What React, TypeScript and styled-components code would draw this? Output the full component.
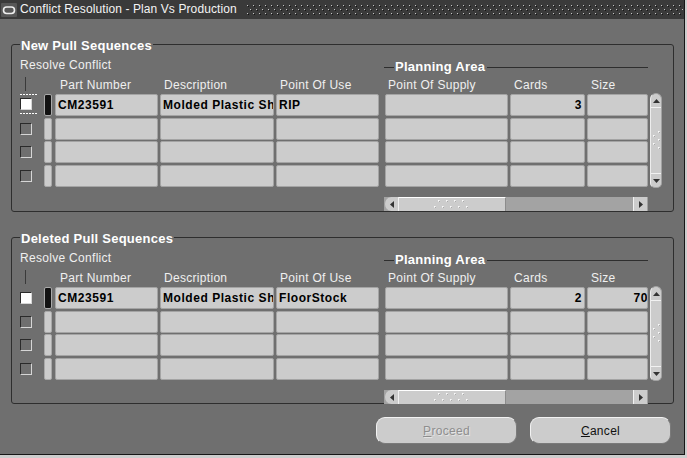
import React from "react";
import styled, { createGlobalStyle } from "styled-components";

const GlobalStyle = createGlobalStyle`
  html, body { margin: 0; padding: 0; }
  body {
    background: #cdcdcd;
    font-family: "Liberation Sans", Arial, sans-serif;
    font-size: 12px;
  }
`;

type RowData = {
  part?: string;
  desc?: string;
  use?: string;
  supply?: string;
  cards?: string;
  size?: string;
};

type Col = {
  key: keyof RowData;
  label: string;
  w: number;
  after: number;
  pad: number;
  right?: boolean;
};

const COLS: Col[] = [
  { key: "part", label: "Part Number", w: 103, after: 2, pad: 5 },
  { key: "desc", label: "Description", w: 114, after: 2, pad: 4 },
  { key: "use", label: "Point Of Use", w: 103, after: 6, pad: 4 },
  { key: "supply", label: "Point Of Supply", w: 123, after: 2, pad: 3 },
  { key: "cards", label: "Cards", w: 75, after: 2, pad: 4, right: true },
  { key: "size", label: "Size", w: 61, after: 0, pad: 4, right: true },
];

const newRows: RowData[] = [
  { part: "CM23591", desc: "Molded Plastic Shell", use: "RIP", cards: "3" },
  {},
  {},
  {},
];

const deletedRows: RowData[] = [
  { part: "CM23591", desc: "Molded Plastic Shell", use: "FloorStock", cards: "2", size: "70" },
  {},
  {},
  {},
];

const BG = "#6f6f6f";

const Window = styled.div`
  width: 685px;
  height: 455px;
  box-sizing: border-box;
  border-right: 1px solid #161616;
  border-bottom: 1px solid #161616;
  background: ${BG};
  display: flex;
  flex-direction: column;
`;

const TitleBar = styled.div`
  height: 19px;
  flex: none;
  background: #3a3a3a;
  display: flex;
  align-items: center;
  color: #f4f4f4;
  line-height: 19px;
  letter-spacing: 0.1px;
`;

const TitleText = styled.span`
  margin-left: 2px;
  white-space: nowrap;
`;

const TitleDots = styled.svg`
  flex: 1 1 0;
  min-width: 0;
  height: 12px;
  margin: 0 1px 0 9px;
`;

const Content = styled.div`
  padding: 25px 0 0 11px;
  display: flex;
  flex-direction: column;
`;

const Group = styled.section<{ $h: number }>`
  position: relative;
  width: 663px;
  height: ${(p) => p.$h}px;
  box-sizing: border-box;
  border: 1px solid #2e2e2e;
  border-radius: 3px;
  padding: 13px 0 0 8px;

  & + & {
    margin-top: 25px;
  }
`;

const Legend = styled.h2`
  position: absolute;
  top: -7px;
  left: 8px;
  margin: 0;
  padding: 0 1px;
  background: ${BG};
  color: #fff;
  font-size: 13px;
  font-weight: bold;
  line-height: 15px;
  letter-spacing: 0.25px;
`;

const HeadTop = styled.div`
  display: flex;
  height: 14px;
`;

const Label = styled.div`
  color: #f0f0f0;
  line-height: 14px;
  letter-spacing: 0.3px;
  white-space: nowrap;
`;

const ResolveLabel = styled(Label)`
  width: 364px;
`;

const AreaTitle = styled.div`
  width: 264px;
  height: 14px;
  margin-top: 2px;
  display: flex;
  align-items: center;
  color: #fff;
  font-size: 13px;
  font-weight: bold;
  line-height: 14px;
  letter-spacing: 0.25px;
  white-space: nowrap;

  &::before {
    content: "";
    width: 10px;
    border-top: 1px solid #2e2e2e;
    margin-right: 1px;
  }
  &::after {
    content: "";
    flex: 1;
    border-top: 1px solid #2e2e2e;
    margin-left: 2px;
  }
`;

const HeadCols = styled.div`
  display: flex;
  height: 14px;
  margin-top: 6px;
`;

const Tick = styled.div`
  width: 24px;
  height: 14px;
  &::before {
    content: "";
    display: block;
    margin: -1px 0 0 5px;
    width: 1px;
    height: 14px;
    background: #3a3a3a;
  }
`;

const Spacer = styled.div<{ $w: number }>`
  width: ${(p) => p.$w}px;
  flex: none;
`;

const Track = styled.div`
  flex: 1;
`;

const HeadCell = styled(Label)<{ $w: number; $after: number; $pad: number }>`
  width: ${(p) => p.$w}px;
  margin-right: ${(p) => p.$after}px;
  padding-left: ${(p) => p.$pad}px;
  box-sizing: border-box;
`;

const Table = styled.div`
  display: flex;
  margin-top: 2px;
`;

const Rows = styled.div`
  display: flex;
  flex-direction: column;
  gap: 1.5px;
`;

const Row = styled.div`
  display: flex;
  align-items: center;
  height: 22px;
`;

const CheckCell = styled.div`
  width: 24px;
  height: 22px;
  display: flex;
  align-items: center;
  flex: none;
`;

const Focus = styled.div`
  align-self: flex-start;
  width: 17px;
  height: 20px;
  display: flex;
  align-items: center;
  background:
    repeating-linear-gradient(90deg, #fff 0 2px, transparent 2px 3px) top / 100% 1px no-repeat,
    repeating-linear-gradient(90deg, #fff 0 2px, transparent 2px 3px) bottom / 100% 1px no-repeat;
`;

const Box = styled.span<{ $on?: boolean }>`
  display: block;
  width: 12px;
  height: 12px;
  box-sizing: border-box;
  border-top: 1px solid #2a2a2a;
  border-left: 1px solid #2a2a2a;
  border-right: 1px solid #d6d6d6;
  border-bottom: 1px solid #d6d6d6;
  background: ${(p) => (p.$on ? "#fff" : "transparent")};
`;

const Indicator = styled.div<{ $current?: boolean }>`
  width: 8px;
  height: 22px;
  flex: none;
  box-sizing: border-box;
  margin-right: 3px;
  border: 1px solid #a9a9a9;
  border-radius: 2px;
  background: ${(p) => (p.$current ? "#121212" : "#cccccc")};
`;

const Field = styled.div<{ $w: number; $after: number; $right?: boolean }>`
  width: ${(p) => p.$w}px;
  margin-right: ${(p) => p.$after}px;
  height: 22px;
  flex: none;
  box-sizing: border-box;
  background: #cccccc;
  border: 1px solid #a4a4a4;
  border-radius: 2px;
  padding: 0 2px;
  display: flex;
  align-items: center;
  justify-content: ${(p) => (p.$right ? "flex-end" : "flex-start")};
  overflow: hidden;
  white-space: nowrap;
  color: #000;
  font-weight: bold;
  letter-spacing: 0.55px;
`;

const Clipped = styled.span`
  margin-right: -3px;
`;

const VScroll = styled.div`
  width: 12px;
  height: 95px;
  margin: -1px 0 0 2px;
  box-sizing: border-box;
  background: #cccccc;
  border: 1px solid #a2a2a2;
  border-left-color: #ededed;
  border-radius: 6px 6px 5px 5px;
  display: flex;
  flex-direction: column;
  justify-content: space-between;
  align-items: stretch;
`;

const VEnd = styled.div<{ $bottom?: boolean }>`
  height: 13px;
  display: flex;
  align-items: center;
  justify-content: center;
  ${(p) => (p.$bottom ? "border-top" : "border-bottom")}: 1px solid #f2f2f2;
`;

const HScroll = styled.div`
  margin: 9px 0 0 364px;
  width: 264px;
  height: 14px;
  display: flex;
  background: #a3a3a3;
`;

const HButton = styled.div<{ $side: "left" | "right" }>`
  width: 15px;
  flex: none;
  box-sizing: border-box;
  background: #cccccc;
  display: flex;
  align-items: center;
  justify-content: center;
  border-radius: ${(p) => (p.$side === "left" ? "7px 0 0 7px" : "0")};
  border-left: 1px solid ${(p) => (p.$side === "left" ? "#a0a0a0" : "#f2f2f2")};
  border-right: 1px solid ${(p) => (p.$side === "left" ? "#f2f2f2" : "#a0a0a0")};
`;

const Thumb = styled.div`
  width: 107px;
  flex: none;
  box-sizing: border-box;
  background: #cccccc;
  border-top: 1px solid #fff;
  border-right: 1px solid #8c8c8c;
  display: flex;
  align-items: center;
  justify-content: center;
`;

const ButtonRow = styled.div`
  display: flex;
  justify-content: flex-end;
  gap: 13px;
  margin: 13px 13px 0 0;
`;

const Button = styled.button`
  width: 141px;
  height: 27px;
  box-sizing: border-box;
  padding: 0;
  border-radius: 9px;
  background: #cccccc;
  border: 1px solid;
  border-color: #f2f2f2 #7a7a7a #7a7a7a #f2f2f2;
  font-family: "Liberation Sans", Arial, sans-serif;
  font-size: 12px;
  letter-spacing: 0.3px;
  color: #111;

  &:disabled {
    color: #8e8e8e;
    text-shadow: 1px 1px 0 #e4e4e4;
  }
`;

const AppIcon = () => (
  <svg width="18" height="19" viewBox="0 0 18 19">
    <rect x="1" y="3" width="16" height="14" rx="1" fill="#575757" />
    <rect x="3.5" y="7" width="11" height="6.5" rx="3.2" fill="none" stroke="#eeeeee" strokeWidth="1.6" />
  </svg>
);

const UpArrow = () => (
  <svg width="7" height="4">
    <polygon points="3.5,0 7,4 0,4" fill="#333" />
  </svg>
);

const DownArrow = () => (
  <svg width="7" height="4">
    <polygon points="0,0 7,0 3.5,4" fill="#333" />
  </svg>
);

const LeftArrow = () => (
  <svg width="4" height="7">
    <polygon points="4,0 4,7 0,3.5" fill="#333" />
  </svg>
);

const RightArrow = () => (
  <svg width="4" height="7">
    <polygon points="0,0 4,3.5 0,7" fill="#333" />
  </svg>
);

const Dot = ({ x, y }: { x: number; y: number }) => (
  <>
    <rect x={x + 1} y={y + 1} width="1" height="1" fill="#7c7c7c" />
    <rect x={x} y={y} width="1.6" height="1.6" fill="#fafafa" />
  </>
);

const HGrip = () => (
  <svg width="36" height="9">
    {[4, 12, 20, 28].map((x) => (
      <Dot key={`a${x}`} x={x} y={0} />
    ))}
    {[0, 8, 16, 24, 32].map((x) => (
      <Dot key={`b${x}`} x={x} y={6} />
    ))}
  </svg>
);

const VGrip = () => (
  <svg width="10" height="20">
    {[0, 4, 8, 12, 16].map((y, i) => (
      <Dot key={y} x={i % 2 ? 2 : 7} y={y} />
    ))}
  </svg>
);

const CheckBox = ({ on, focus }: { on?: boolean; focus?: boolean }) => (
  <CheckCell>{focus ? <Focus><Box $on={on} /></Focus> : <Box $on={on} />}</CheckCell>
);

const SequenceGroup = ({
  title,
  rows,
  focused,
  height,
}: {
  title: string;
  rows: RowData[];
  focused?: boolean;
  height: number;
}) => (
  <Group $h={height}>
    <Legend>{title}</Legend>
    <HeadTop>
      <ResolveLabel>Resolve Conflict</ResolveLabel>
      <AreaTitle>Planning Area</AreaTitle>
    </HeadTop>
    <HeadCols>
      <Tick />
      <Spacer $w={11} />
      {COLS.map((c) => (
        <HeadCell key={c.key} $w={c.w} $after={c.after} $pad={c.pad}>
          {c.label}
        </HeadCell>
      ))}
    </HeadCols>
    <Table>
      <Rows>
        {rows.map((r, i) => (
          <Row key={i}>
            <CheckBox on={i === 0} focus={focused && i === 0} />
            <Indicator $current={i === 0} />
            {COLS.map((c) => (
              <Field key={c.key} $w={c.w} $after={c.after} $right={c.right}>
                {c.key === "size" && r.size ? <Clipped>{r.size}</Clipped> : r[c.key]}
              </Field>
            ))}
          </Row>
        ))}
      </Rows>
      <VScroll>
        <VEnd>
          <UpArrow />
        </VEnd>
        <VGrip />
        <VEnd $bottom>
          <DownArrow />
        </VEnd>
      </VScroll>
    </Table>
    <HScroll>
      <HButton $side="left">
        <LeftArrow />
      </HButton>
      <Thumb>
        <HGrip />
      </Thumb>
      <Track />
      <HButton $side="right">
        <RightArrow />
      </HButton>
    </HScroll>
  </Group>
);

export default function App() {
  return (
    <>
      <GlobalStyle />
      <Window>
        <TitleBar>
          <AppIcon />
          <TitleText>Conflict Resolution - Plan Vs Production</TitleText>
          <TitleDots>
            <defs>
              <pattern id="title-dots" width="6" height="8" patternUnits="userSpaceOnUse">
                <rect x="2" y="2" width="1" height="1" fill="#151515" />
                <rect x="1" y="1" width="1" height="1" fill="#c4c4c4" />
                <rect x="5" y="6" width="1" height="1" fill="#151515" />
                <rect x="4" y="5" width="1" height="1" fill="#c4c4c4" />
              </pattern>
            </defs>
            <rect width="100%" height="100%" fill="url(#title-dots)" />
          </TitleDots>
        </TitleBar>
        <Content>
          <SequenceGroup title="New Pull Sequences" rows={newRows} focused height={168} />
          <SequenceGroup title="Deleted Pull Sequences" rows={deletedRows} height={167} />
          <ButtonRow>
            <Button disabled>
              <u>P</u>roceed
            </Button>
            <Button>
              <u>C</u>ancel
            </Button>
          </ButtonRow>
        </Content>
      </Window>
    </>
  );
}
